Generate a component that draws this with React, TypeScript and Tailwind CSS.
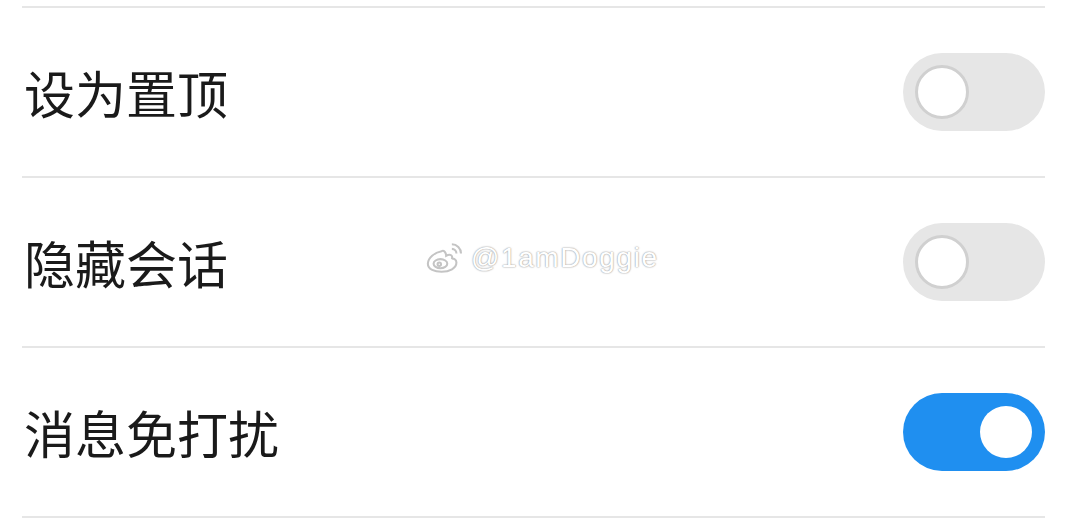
import React from 'react';

const rows = [
  { label: '设为置顶', on: false },
  { label: '隐藏会话', on: false },
  { label: '消息免打扰', on: true },
];

function Toggle({ on }: { on: boolean }) {
  return (
    <div
      className={
        on
          ? 'flex h-[78px] w-[142px] items-center justify-end rounded-full bg-[#1f8ff0] px-[13px]'
          : 'flex h-[78px] w-[142px] items-center justify-start rounded-full bg-[#e6e6e6] px-[12px]'
      }
    >
      <div
        className={
          on
            ? 'h-[52px] w-[52px] rounded-full bg-white'
            : 'h-[54px] w-[54px] rounded-full border-[3px] border-[#d0d0d0] bg-white'
        }
      />
    </div>
  );
}

function WeiboLogo() {
  return (
    <svg width="40" height="32" viewBox="0 0 34 28" fill="none" stroke="#c4c4c4" strokeWidth="1.8">
      <path d="M14 8c-6 1-12 6-12 11 0 5 6 7 12 7 7 0 13-3 13-8 0-3-3-4-4-3 1-3-1-5-5-3 0-3-2-5-4-4z" fill="#fff" />
      <ellipse cx="13" cy="19" rx="6" ry="4" />
      <circle cx="12" cy="19.5" r="1.5" />
      <path d="M23 6a4 4 0 0 1 4 4" />
      <path d="M23 2a8 8 0 0 1 8 8" />
    </svg>
  );
}

export default function App() {
  return (
    <div className="relative h-[519px] w-[1080px] overflow-hidden bg-white pt-[6px] font-['Noto_Sans_CJK_SC',sans-serif]">
      <div className="ml-[22px] mr-[35px] border-t-2 border-[#e6e6e6]">
        {rows.map((row) => (
          <div
            key={row.label}
            className="flex h-[170px] items-center justify-between border-b-2 border-[#e6e6e6]"
          >
            <span className="pl-[2px] text-[51px] leading-none text-[#1a1a1a]">{row.label}</span>
            <Toggle on={row.on} />
          </div>
        ))}
      </div>
      <div className="absolute left-[425px] top-[242px] flex items-center gap-[6px]">
        <WeiboLogo />
        <span className="font-['Liberation_Sans',sans-serif] text-[28px] tracking-[1.6px] leading-none text-white [text-shadow:0_0_2px_#a0a0a0,0_0_1px_#a0a0a0]">
          @1amDoggie
        </span>
      </div>
    </div>
  );
}
